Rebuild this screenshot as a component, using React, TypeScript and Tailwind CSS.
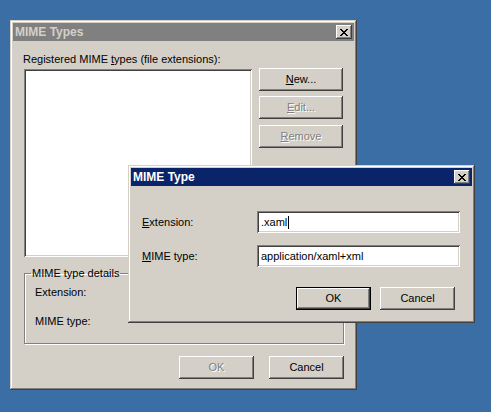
import React from "react";

const raised =
  "shadow-[inset_-1px_-1px_#404040,inset_1px_1px_#ffffff,inset_-2px_-2px_#808080,inset_2px_2px_#d4d0c8]";
const sunken =
  "shadow-[inset_1px_1px_#808080,inset_-1px_-1px_#ffffff,inset_2px_2px_#404040,inset_-2px_-2px_#d4d0c8]";
const frame =
  "shadow-[inset_-1px_-1px_#404040,inset_1px_1px_#d4d0c8,inset_-2px_-2px_#808080,inset_2px_2px_#ffffff]";

function CloseBox() {
  return (
    <div
      className={`w-[16px] h-[14px] bg-[#d4d0c8] flex items-center justify-center ${raised}`}
    >
      <svg width="8" height="7" viewBox="0 0 8 7">
        <path
          d="M0 0h2v1h1v1h2V1h1V0h2v1H7v1H6v1H5v1h1v1h1v1h1v1H6V6H5V5H3v1H2v1H0V6h1V5h1V4h1V3H2V2H1V1H0z"
          fill="#000"
        />
      </svg>
    </div>
  );
}

function TitleBar({ title, active }: { title: string; active: boolean }) {
  return (
    <div
      className={`h-[18px] flex items-center justify-between pl-[2px] pr-[2px] ${
        active ? "bg-[#0a246a] text-white" : "bg-[#808080] text-[#d4d0c8]"
      }`}
    >
      <span className="text-[12px] font-bold leading-none">{title}</span>
      <CloseBox />
    </div>
  );
}

function Button({
  children,
  disabled,
  isDefault,
}: {
  children: React.ReactNode;
  disabled?: boolean;
  isDefault?: boolean;
}) {
  const inner = (
    <div
      className={`h-full w-full flex items-center justify-center bg-[#d4d0c8] text-[11px] ${raised} ${
        disabled ? "text-[#808080] [text-shadow:1px_1px_#ffffff]" : "text-black"
      }`}
    >
      {children}
    </div>
  );
  if (isDefault) {
    return <div className="w-[75px] h-[23px] border border-black">{inner}</div>;
  }
  return <div className="w-[75px] h-[23px]">{inner}</div>;
}

export default function App() {
  return (
    <div
      className="relative w-[491px] h-[412px] bg-[#3a6ea5] overflow-hidden text-black"
      style={{ fontFamily: '"Liberation Sans", Arial, sans-serif' }}
    >
      {/* MIME Types (inactive, behind) */}
      <div
        className={`absolute left-[10px] top-[20px] w-[347px] h-[370px] bg-[#d4d0c8] p-[3px] ${frame}`}
      >
        <TitleBar title="MIME Types" active={false} />
        <div className="pl-[10px] pt-[12px]">
          <div className="text-[11px] leading-[13px]">
            Registered MIME <span className="underline">t</span>ypes (file extensions):
          </div>
          <div className="flex mt-[1px]">
            <div className={`w-[228px] h-[188px] mt-[2px] ml-[1px] bg-white ${sunken}`} />
            <div className="ml-[7px] mt-[1px] flex flex-col gap-[5px]">
              <div className="w-[84px] h-[23px]">
                <div className={`h-full flex items-center justify-center text-[11px] ${raised}`}>
                  <span className="underline">N</span>ew...
                </div>
              </div>
              <div className="w-[84px] h-[23px]">
                <div
                  className={`h-full flex items-center justify-center text-[11px] text-[#808080] [text-shadow:1px_1px_#ffffff] ${raised}`}
                >
                  <span className="underline">E</span>dit...
                </div>
              </div>
              <div className="w-[84px] h-[23px] mt-[1px]">
                <div
                  className={`h-full flex items-center justify-center text-[11px] text-[#808080] [text-shadow:1px_1px_#ffffff] ${raised}`}
                >
                  <span className="underline">R</span>emove
                </div>
              </div>
            </div>
          </div>
          <fieldset className="mt-[10px] ml-[1px] w-[320px] h-[77px] border border-[#808080] shadow-[1px_1px_0_#ffffff,inset_1px_1px_0_#ffffff] px-[10px] pb-0">
            <legend className="ml-[-4px] px-[1px] text-[11px] leading-[13px]">
              MIME type details
            </legend>
            <div className="text-[11px] leading-[13px] mt-[6px]">Extension:</div>
            <div className="text-[11px] leading-[13px] mt-[16px]">MIME type:</div>
          </fieldset>
          <div className="flex gap-[15px] mt-[12px] ml-[156px]">
            <Button disabled>OK</Button>
            <Button>Cancel</Button>
          </div>
        </div>
      </div>

      {/* MIME Type (active, front) */}
      <div
        className={`absolute left-[128px] top-[165px] w-[347px] h-[158px] bg-[#d4d0c8] p-[3px] ${frame}`}
      >
        <TitleBar title="MIME Type" active />
        <div className="pl-[11px] pt-[25px] grid grid-cols-[115px_203px] gap-y-[12px] items-center">
          <div className="text-[11px] leading-[13px]">
            <span className="underline">E</span>xtension:
          </div>
          <div className={`h-[22px] bg-white ${sunken} flex items-center pl-[4px] text-[11px]`}>
            .xaml<span className="inline-block w-px h-[13px] bg-black ml-px" />
          </div>
          <div className="text-[11px] leading-[13px]">
            <span className="underline">M</span>IME type:
          </div>
          <div className={`h-[22px] bg-white ${sunken} flex items-center pl-[4px] text-[11px]`}>
            application/xaml+xml
          </div>
        </div>
        <div className="flex gap-[9px] mt-[20px] ml-[165px]">
          <Button isDefault>OK</Button>
          <Button>Cancel</Button>
        </div>
      </div>
    </div>
  );
}
